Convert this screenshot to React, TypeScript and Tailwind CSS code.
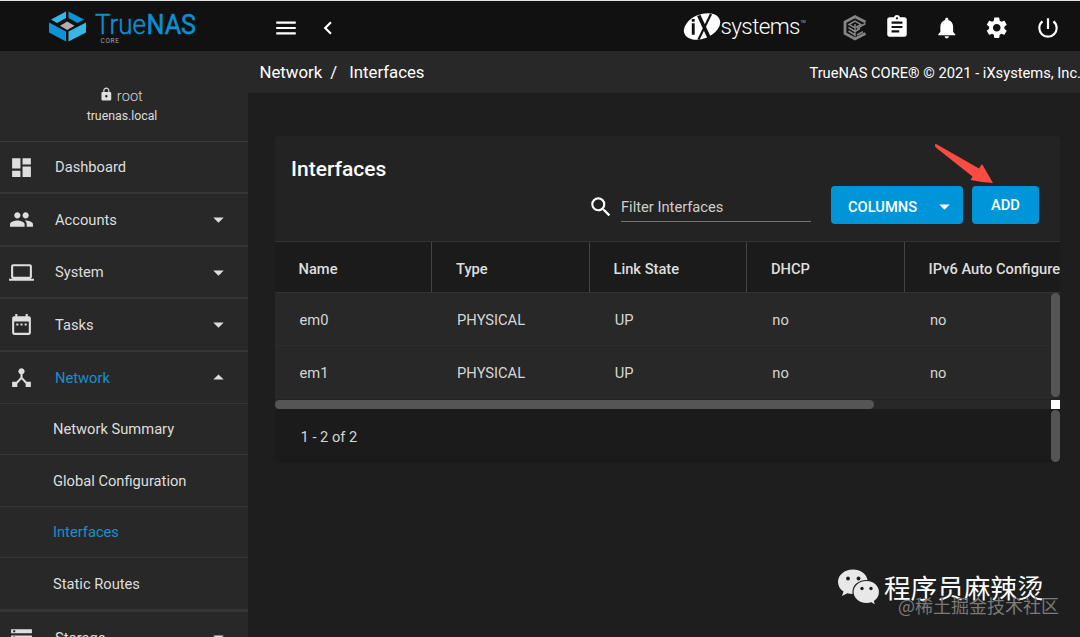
import React from "react";
import {
  MdDashboard, MdPeople, MdLaptop, MdDateRange, MdDeviceHub, MdStorage, MdMenu, MdChevronLeft,
  MdAssignment, MdNotifications, MdSettings, MdPowerSettingsNew, MdSearch, MdArrowDropDown,
  MdArrowDropUp, MdLock,
} from "react-icons/md";

function TrueNasLogo() {
  return (
    <svg width="160" height="40" viewBox="0 0 160 40" className="block">
      <path d="M18 3.500V10L9 15L3 11.500Z" fill="#37b6e8" />
      <path d="M20.500 3.500V10L29.500 15L36 11.500Z" fill="#0f93d6" />
      <path d="M1 14.500L18 23.500V33.500L1 24.500Z" fill="#0f93d6" />
      <path d="M38 14.500L20.500 23.500V33.500L38 24.500Z" fill="#37b6e8" />
      <path d="M19.200 13.500L26.500 17.800L19.200 22L12 17.800Z" fill="#aeaeae" />
      <text x="47" y="26.200" fontFamily="Roboto" fontSize="27" fontWeight="300" fill="#0c90d2" stroke="#0c90d2" strokeWidth="0.400" textLength="51" lengthAdjust="spacingAndGlyphs">True</text>
      <text x="98.500" y="26.200" fontFamily="Roboto" fontSize="27" fontWeight="400" fill="#0c90d2" stroke="#0c90d2" strokeWidth="0.500" textLength="49.500" lengthAdjust="spacingAndGlyphs">NAS</text>
      <text x="52.500" y="35" fontFamily="Roboto" fontSize="6.500" fill="#a5a5a5" textLength="18.500">CORE</text>
    </svg>
  );
}

function IxLogo() {
  return (
    <svg width="130" height="32" viewBox="0 0 130 32" className="block">
      <ellipse cx="19" cy="15.500" rx="19" ry="12" transform="rotate(-22 19 15.500)" fill="#fff" />
      <path d="M8.800 12.300h2.900v11.500H8.800z M8.800 8h2.900v2.700H8.800z" fill="#111" />
      <path d="M15.800 4.500L26.500 27.500" stroke="#111" strokeWidth="3.600" />
      <path d="M28 3L15.500 28.500" stroke="#111" strokeWidth="2.200" />
      <text x="37.500" y="22.800" fontFamily="Roboto" fontSize="22.500" fontWeight="300" fill="#fff" textLength="80" lengthAdjust="spacing">systems</text>
      <text x="117.500" y="12" fontFamily="Roboto" fontSize="3.500" fill="#bbb">TM</text>
    </svg>
  );
}

function TrueCommandIcon() {
  return (
    <svg width="24" height="26" viewBox="0 0 24 26" className="block" fill="none" stroke="#858585">
      <path d="M22.500 7L12 1.700L2 7V18.500L12 24L22.500 18.500" strokeWidth="2.800" />
      <path d="M22.500 8.500L14 13.500M14 20L20 16.800" strokeWidth="1.600" />
      <path d="M6 9.500L12 6L18 9.500L12 13ZM12 9V21.500M5.500 12.500L12 16.500L17 13.500M5.500 16L12 20" strokeWidth="1.500" />
    </svg>
  );
}

const menu = [
  { label: "Dashboard", Icon: MdDashboard, arrow: false },
  { label: "Accounts", Icon: MdPeople, arrow: true },
  { label: "System", Icon: MdLaptop, arrow: true },
  { label: "Tasks", Icon: MdDateRange, arrow: true },
];
const subMenu = ["Network Summary", "Global Configuration", "Interfaces", "Static Routes"];
const columns = ["Name", "Type", "Link State", "DHCP", "IPv6 Auto Configure"];
const rows = [
  ["em0", "PHYSICAL", "UP", "no", "no"],
  ["em1", "PHYSICAL", "UP", "no", "no"],
];

function Sidebar() {
  return (
    <aside className="h-[586px] w-[248px] shrink-0 overflow-hidden bg-[#282828] text-[14.700px] text-[#dedede]">
      <div className="flex h-[91px] flex-col items-center border-b border-[#3a3a3a] pr-[4px] pt-[34px]">
        <div className="mr-[2px] flex h-[22px] items-center gap-[3px] text-[#d4d4d4]">
          <MdLock className="mb-[3px] size-[14.700px] text-[#e0e0e0]" />
          <span className="pt-[1px] font-light">root</span>
        </div>
        <div className="mt-[1px] text-[12.300px] leading-[16px]">truenas.local</div>
      </div>
      {menu.map(({ label, Icon, arrow }) => (
        <div key={label} className="flex h-[52.400px] items-center border-b-2 border-[#353535] pl-[9px] pt-[0.600px]">
          <Icon className="size-[25px]" />
          <span className="ml-[21px] flex-1">{label}</span>
          {arrow && <MdArrowDropDown className="mr-[17.500px] size-[25px]" />}
        </div>
      ))}
      <div className="flex h-[52px] items-center border-b border-[#353535] pl-[9px] pt-[1px]">
        <MdDeviceHub className="size-[25px]" />
        <span className="ml-[21px] flex-1 text-[#1a8fcf]">Network</span>
        <MdArrowDropUp className="mr-[17.500px] size-[25px]" />
      </div>
      {subMenu.map((s) => (
        <div
          key={s}
          className={
            "flex h-[51.500px] items-center border-b border-[#353535] pl-[53px] pt-[1px] " +
            (s === "Interfaces" ? "text-[#1a8fcf]" : "")
          }
        >
          {s}
        </div>
      ))}
      <div className="flex h-[54px] items-center border-t-2 border-[#353535] pl-[9px]">
        <MdStorage className="size-[25px]" />
        <span className="ml-[21px] flex-1 pt-[1px]">Storage</span>
        <MdArrowDropDown className="mr-[17.500px] size-[25px]" />
      </div>
    </aside>
  );
}

function InterfacesCard() {
  return (
    <section className="ml-[26.500px] mt-[43px] flex w-[785.500px] flex-col overflow-hidden rounded-[4px] bg-[#232323]">
      <div className="flex h-[105px] flex-col px-[16.500px] pt-[19px]">
        <h1 className="text-[21px] font-medium leading-[28px] text-white">Interfaces</h1>
        <div className="ml-auto mr-[4.500px] mt-[3px] flex h-[38px]">
          <MdSearch className="mr-[7.500px] mt-[8px] size-[26px] text-white" />
          <div className="mr-[20px] flex h-[36px] w-[190px] items-center border-b border-[#737373] pt-[7px] text-[14.700px] text-[#cfcfcf]">
            Filter Interfaces
          </div>
          <button className="mr-[9px] flex w-[132px] items-center rounded-[4px] bg-[#0095d9] pl-[17px] text-[14.700px] font-medium text-white">
            <span className="flex-1 pt-[4px] text-left">COLUMNS</span>
            <MdArrowDropDown className="mr-[6px] mt-[3px] size-[25px]" />
          </button>
          <button className="w-[67px] rounded-[4px] bg-[#0095d9] text-[14.700px] font-medium text-white">ADD</button>
        </div>
      </div>
      <div className="flex h-[52px] overflow-hidden border-y border-[#333] bg-[#1b1b1b] text-[14.700px] font-medium text-[#dedede]">
        {columns.map((c) => (
          <div key={c} className="flex w-[157.500px] shrink-0 items-center whitespace-nowrap border-r border-[#444] pl-[24px] pt-[5px] last:border-r-0">
            {c}
          </div>
        ))}
      </div>
      <div className="flex bg-[#282828]">
        <div className="min-w-0 flex-1 overflow-hidden">
          {rows.map((r) => (
            <div key={r[0]} className="flex h-[52.500px] border-b border-[#2d2d2d] text-[14.700px] text-[#d6d6d6]">
              {r.map((v, i) => (
                <div key={i} className="flex w-[157.600px] shrink-0 items-center pl-[25px] pt-[3.400px]">{v}</div>
              ))}
            </div>
          ))}
        </div>
        <div className="h-[104px] w-[9px] rounded-full bg-[#555]" />
      </div>
      <div className="h-[2px] bg-[#242424]" />
      <div className="flex h-[9px] justify-between bg-[#282828]">
        <div className="w-[599px] rounded-full bg-[#555]" />
        <div className="w-[9px] bg-white" />
      </div>
      <div className="flex h-[54px] justify-between bg-[#1b1b1b] pl-[26px] text-[14.700px] text-[#d6d6d6]">
        <span className="pt-[16.500px]">1 - 2 of 2</span>
        <div className="mt-[1px] h-[52px] w-[9px] rounded-full bg-[#555]" />
      </div>
    </section>
  );
}

export default function App() {
  return (
    <div className="relative h-[637px] w-[1080px] overflow-hidden bg-[#1e1e1e] font-['Roboto',sans-serif]">
      <header className="flex h-[51px] items-center border-t border-[#dfe5e2] bg-[#111] text-white">
        <div className="ml-[48px] mt-[3px] w-[225px]"><TrueNasLogo /></div>
        <MdMenu className="mt-[3px] size-[26px] shrink-0" />
        <MdChevronLeft className="ml-[16px] mt-[3px] size-[26px]" />
        <div className="ml-auto mt-[1px] w-[124px]"><IxLogo /></div>
        <div className="ml-[36px] mt-[4px]"><TrueCommandIcon /></div>
        <MdAssignment className="ml-[17px] mt-[2px] size-[26px]" />
        <MdNotifications className="ml-[24px] mt-[4px] size-[25.500px]" />
        <MdSettings className="ml-[24.500px] mt-[3px] size-[25.500px]" />
        <MdPowerSettingsNew className="ml-[25px] mr-[19.500px] mt-[3px] size-[26px]" />
      </header>
      <div className="flex">
        <Sidebar />
        <main className="min-w-0 flex-1">
          <div className="flex h-[42px] items-center overflow-hidden whitespace-nowrap bg-[#282828] pl-[11.500px] pt-[2px] text-[16.800px] text-white">
            <div className="flex">
              <span>Network</span>
              <span className="ml-[8px] mr-[12px]">/</span>
              <span>Interfaces</span>
            </div>
            <span className="-mr-[1px] ml-auto text-[14.700px]">TrueNAS CORE® © 2021 - iXsystems, Inc.</span>
          </div>
          <InterfacesCard />
        </main>
      </div>
      <svg className="absolute left-[930px] top-[140px]" width="70" height="48" viewBox="0 0 70 48">
        <path d="M5 4.500Q4.500 6.500 6.500 8L42.500 36.500L40.500 40Q52 42.500 63 43L52 24L49 28.500L7 4.500Q5.500 3.500 5 4.500Z" fill="#fb4b43" />
      </svg>
      <svg className="absolute left-[837px] top-[568px]" width="44" height="38" viewBox="0 0 44 38">
        <path d="M16 1.500C7.500 1.500 1 7 1 14c0 4 2.200 7.300 5.500 9.600L5 28l5.300-2.700c2 .6 4 .9 6.200.8C29 25 31 18 30.500 12 29.500 6 23.500 1.500 16 1.500Z" fill="#e8e8e8" />
        <path d="M29.500 12.500c-7.500 0-13.500 5-13.500 11.500s6 11.500 13.500 11.500c1.700 0 3.300-.2 4.800-.7l4.400 2.600-1.200-4.100c3-2.100 5-5.500 5-9.300 0-6.500-5.500-11.500-13-11.500Z" fill="#e8e8e8" stroke="#1e1e1e" strokeWidth="1.200" />
        <g fill="#1e1e1e"><circle cx="11" cy="10.500" r="1.900" /><circle cx="21.500" cy="10.500" r="1.900" /><circle cx="25" cy="20.500" r="1.700" /><circle cx="34" cy="20.500" r="1.700" /></g>
      </svg>
      <div className="absolute left-[884px] top-[567px] whitespace-nowrap font-['Noto_Sans_CJK_SC',sans-serif] text-[26.600px] leading-[40px] text-white">程序员麻辣烫</div>
      <div className="absolute left-[898px] top-[592px] whitespace-nowrap font-['Noto_Sans_CJK_SC',sans-serif] text-[18px] leading-[26px] text-[#7a7a7a]">@稀土掘金技术社区</div>
    </div>
  );
}
